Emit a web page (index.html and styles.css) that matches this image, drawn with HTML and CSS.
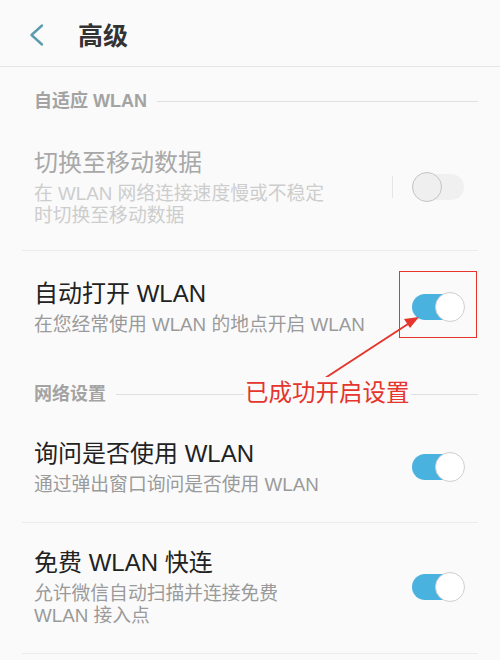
FILE: index.html
```html
<!DOCTYPE html>
<html lang="zh-CN">
<head>
<meta charset="utf-8">
<title>高级</title>
<link rel="stylesheet" href="styles.css">
</head>
<body>
<div class="page">
  <header class="topbar">
    <svg class="back" width="16" height="24" viewBox="0 0 16 24"><polyline points="13,2.5 2.5,12 13,21.5" fill="none" stroke="#5a9cae" stroke-width="2.4" stroke-linecap="round" stroke-linejoin="round"/></svg>
    <h1 class="title">高级</h1>
  </header>

  <div class="section s1"><span class="section-label">自适应 WLAN</span><span class="section-line"></span></div>

  <div class="item item-first disabled">
    <div class="text">
      <div class="item-title">切换至移动数据</div>
      <div class="item-sub">在 WLAN 网络连接速度慢或不稳定<br>时切换至移动数据</div>
    </div>
    <span class="vdiv"></span>
    <span class="switch off"><span class="thumb"></span></span>
  </div>

  <div class="item no-border">
    <div class="text">
      <div class="item-title">自动打开 WLAN</div>
      <div class="item-sub">在您经常使用 WLAN 的地点开启 WLAN</div>
    </div>
    <span class="switch on"><span class="thumb"></span></span>
  </div>

  <div class="section s2"><span class="section-label">网络设置</span><span class="section-line"></span></div>

  <div class="item">
    <div class="text">
      <div class="item-title">询问是否使用 WLAN</div>
      <div class="item-sub">通过弹出窗口询问是否使用 WLAN</div>
    </div>
    <span class="switch on"><span class="thumb"></span></span>
  </div>

  <div class="item">
    <div class="text">
      <div class="item-title">免费 WLAN 快连</div>
      <div class="item-sub">允许微信自动扫描并连接免费<br>WLAN 接入点</div>
    </div>
    <span class="switch on"><span class="thumb"></span></span>
  </div>

  <div class="mark-box"></div>
  <svg class="mark-arrow" width="500" height="660" viewBox="0 0 500 660">
    <line x1="319" y1="382" x2="408" y2="324" stroke="#e5352d" stroke-width="2"/>
    <polygon points="419,317 404,319 410,328" fill="#e5352d"/>
  </svg>
  <div class="mark-text">已成功开启设置</div>
</div>
</body>
</html>
```
FILE: styles.css
```css
html, body {
  margin: 0;
  padding: 0;
  background: #fafafa;
}
body {
  font-family: "Liberation Sans", "Noto Sans CJK SC", sans-serif;
  color: #222;
}
.page {
  position: relative;
  width: 500px;
  height: 660px;
  overflow: hidden;
}
.topbar {
  height: 66px;
  border-bottom: 1px solid #e6e6e6;
  display: flex;
  align-items: center;
  padding-left: 29px;
}
.back {
  display: block;
  margin-top: 3px;
}
.title {
  margin: 0 0 0 33px;
  padding-top: 6px;
  font-size: 25px;
  font-weight: 700;
  color: #333;
  line-height: 30px;
}
.section {
  display: flex;
  align-items: center;
  padding: 22px 22px 10px 34px;
}
.section.s2 {
  padding-bottom: 8px;
}
.section-label {
  font-size: 18px;
  line-height: 24px;
  font-weight: 700;
  color: #a3a3a3;
}
.section-line {
  flex: 1;
  height: 1px;
  background: #e0e0e0;
  margin-left: 10px;
}
.item {
  display: flex;
  align-items: center;
  margin: 0 22px;
  padding: 24px 14px 26px 12px;
  border-bottom: 1px solid #ececec;
}
.item-first {
  padding-bottom: 23px;
}
.item.no-border {
  border-bottom: none;
  padding-top: 27px;
  padding-bottom: 24px;
}
.text {
  flex: 1;
}
.item-title {
  font-size: 24px;
  line-height: 32px;
  color: #222;
}
.item-sub {
  margin-top: 4px;
  font-size: 18.8px;
  line-height: 22px;
  color: #9a9a9a;
}
.disabled .item-title {
  color: #a8a8a8;
}
.disabled .item-sub {
  color: #cdcdcd;
}
.vdiv {
  width: 1px;
  height: 22px;
  background: #e6e6e6;
  margin-right: 19px;
}
.switch {
  position: relative;
  display: block;
  width: 52px;
  height: 26px;
  border-radius: 13px;
}
.switch.on {
  background: #4ab2df;
}
.switch.off {
  background: #f0f0f0;
}
.thumb {
  position: absolute;
  top: -2px;
  width: 28px;
  height: 28px;
  border-radius: 50%;
}
.switch.on .thumb {
  right: -1px;
  background: #fff;
  border: 1px solid #cfcfcf;
}
.switch.off .thumb {
  left: 0;
  background: #efefef;
  border: 1px solid #c4c4c4;
}
.mark-box {
  position: absolute;
  left: 399px;
  top: 271px;
  width: 76px;
  height: 65px;
  border: 1.5px solid #e5352d;
}
.mark-arrow {
  position: absolute;
  left: 0;
  top: 0;
}
.mark-text {
  position: absolute;
  left: 244px;
  top: 377px;
  font-size: 23.5px;
  line-height: 32px;
  color: #e5352d;
  background: #fafafa;
  padding: 0 1px;
}
```
